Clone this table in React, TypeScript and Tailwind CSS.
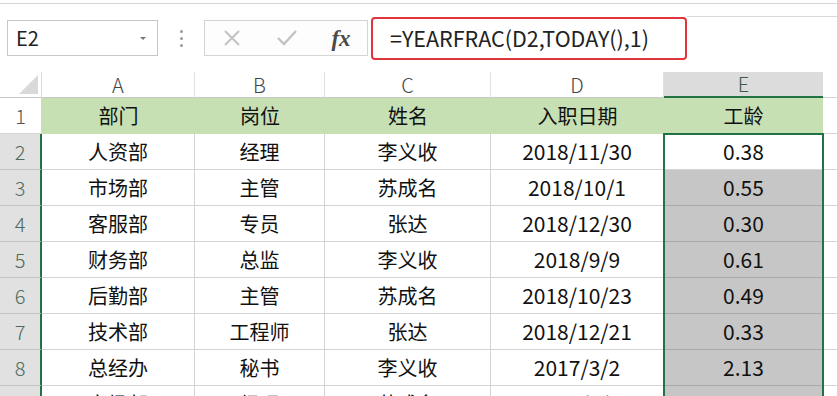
import React from "react";

const font = { fontFamily: '"Noto Sans CJK SC", "Noto Sans", sans-serif' };

const rows = [
  ["人资部", "经理", "李义收", "2018/11/30", "0.38"],
  ["市场部", "主管", "苏成名", "2018/10/1", "0.55"],
  ["客服部", "专员", "张达", "2018/12/30", "0.30"],
  ["财务部", "总监", "李义收", "2018/9/9", "0.61"],
  ["后勤部", "主管", "苏成名", "2018/10/23", "0.49"],
  ["技术部", "工程师", "张达", "2018/12/21", "0.33"],
  ["总经办", "秘书", "李义收", "2017/3/2", "2.13"],
  ["市场部", "经理", "苏成名", "2018/8/8", "0.68"],
];

export default function App() {
  return (
    <div
      className="relative h-[396px] w-[837px] overflow-hidden bg-white text-[#111]"
      style={font}
    >
      <div className="h-[4px] border-b border-[#d5d5d5]" />
      <div className="flex h-[68px] items-center pl-[7px]">
        <div className="flex h-[36px] w-[151px] items-center justify-between border border-[#c6c6c6] pl-[8px] pr-[10px]">
          <span className="text-[20px] leading-none text-[#222]">E2</span>
          <svg width="8" height="5" viewBox="0 0 8 5">
            <path d="M1 1 L7 1 L4 4 Z" fill="#777" />
          </svg>
        </div>
        <div className="flex w-[46px] flex-col items-center gap-[4px]">
          <span className="h-[3px] w-[3px] rounded-full bg-[#9a9a9a]" />
          <span className="h-[3px] w-[3px] rounded-full bg-[#9a9a9a]" />
          <span className="h-[3px] w-[3px] rounded-full bg-[#9a9a9a]" />
        </div>
        <div className="flex h-[36px] w-[164px] items-center border border-[#d4d4d4] bg-[#fdfdfd]">
          <div className="flex w-[54px] justify-center">
            <svg width="18" height="18" viewBox="0 0 18 18">
              <path d="M2 2 L16 16 M16 2 L2 16" stroke="#c2c2c2" strokeWidth="2" fill="none" />
            </svg>
          </div>
          <div className="flex w-[56px] justify-center">
            <svg width="22" height="18" viewBox="0 0 22 18">
              <path d="M2 9 L8 15 L20 2" stroke="#c2c2c2" strokeWidth="2.4" fill="none" />
            </svg>
          </div>
          <div className="flex flex-1 justify-center">
            <span
              className="text-[23px] font-bold italic leading-none text-[#4a4a4a]"
              style={{ fontFamily: '"Liberation Serif", serif' }}
            >
              fx
            </span>
          </div>
        </div>
        <div className="ml-[3px] flex h-[43px] w-[316px] items-center rounded-[4px] border-2 border-[#e0353c] pl-[17px]">
          <span className="text-[21.5px] leading-none text-[#222]">=YEARFRAC(D2,TODAY(),1)</span>
        </div>
        <div className="mt-[-14px] h-[30px] flex-1 border-t border-[#d8d8d8]" />
      </div>

      <div className="grid grid-cols-[42px_153px_130px_166px_173px_159px_1fr]">
        {/* header row */}
        <div className="relative h-[26px] border-b border-[#c8c8c8] border-r border-r-[#dcdcdc]">
          <svg className="absolute bottom-[3px] right-[3px]" width="19" height="19" viewBox="0 0 19 19">
            <path d="M19 0 L19 19 L0 19 Z" fill="#d9d9d9" />
          </svg>
        </div>
        {["A", "B", "C", "D"].map((c) => (
          <div
            key={c}
            className="flex h-[26px] items-center justify-center border-b border-r border-b-[#c8c8c8] border-r-[#e0e0e0] text-[20px] font-light text-[#444]"
          >
            {c}
          </div>
        ))}
        <div className="flex h-[26px] items-center justify-center border-b-2 border-b-[#217346] bg-[#dcdcdc] text-[20px] font-light text-[#3d5a4b]">
          E
        </div>
        <div className="h-[26px] border-b border-[#d4d4d4]" />

        {/* row 1 */}
        <div className="flex h-[36px] items-center justify-center border-b border-r border-[#d4d4d4] text-[20px] font-light text-[#555]">
          1
        </div>
        {["部门", "岗位", "姓名", "入职日期", "工龄"].map((t) => (
          <div
            key={t}
            className="flex h-[36px] items-center justify-center bg-[#c6e0b4] text-[20px]"
          >
            {t}
          </div>
        ))}
        <div className="h-[36px] border-b border-[#d4d4d4]" />

        {rows.map((r, i) => (
          <React.Fragment key={i}>
            <div className="flex h-[36px] items-center justify-center border-b border-b-[#c4c4c4] border-r-2 border-r-[#217346] bg-[#e1e1e1] text-[20px] font-light text-[#4f6a5c]">
              {i + 2}
            </div>
            {r.slice(0, 3).map((t, j) => (
              <div
                key={j}
                className="flex h-[36px] items-center justify-center border-b border-r border-[#d4d4d4] text-[20px]"
              >
                {t}
              </div>
            ))}
            <div className="flex h-[36px] items-center justify-center border-b border-r border-[#d4d4d4] text-[21px]">
              {r[3]}
            </div>
            <div
              className={
                i === 0
                  ? "flex h-[36px] items-center justify-center border-b border-[#d4d4d4] bg-white text-[21px]"
                  : "flex h-[36px] items-center justify-center border-b border-[#a9a9a9] bg-[#c6c6c6] text-[21px]"
              }
            >
              {r[4]}
            </div>
            <div className="h-[36px] border-b border-[#d4d4d4]" />
          </React.Fragment>
        ))}
      </div>

      <div className="pointer-events-none absolute left-[663px] top-[133px] h-[300px] w-[161px] border-2 border-[#217346]" />
    </div>
  );
}
